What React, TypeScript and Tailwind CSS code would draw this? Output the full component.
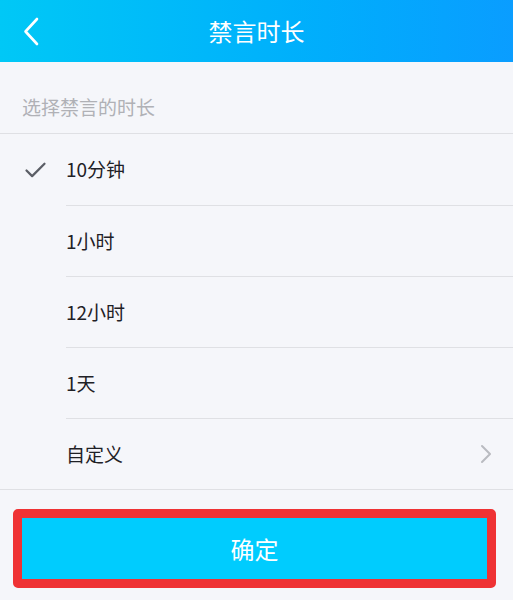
import { Check } from "lucide-react"

const options = [
  { label: "10分钟", checked: true },
  { label: "1小时", checked: false },
  { label: "12小时", checked: false },
  { label: "1天", checked: false },
]

export default function App() {
  return (
    <div className="w-[513px] h-[600px] bg-[#f5f6fa] overflow-hidden flex flex-col" style={{ fontFamily: '"Noto Sans CJK SC", "Noto Sans", sans-serif' }}>
      {/* header */}
      <div className="h-[62px] shrink-0 flex items-center relative bg-gradient-to-r from-[#00c8f6] to-[#0a9dff]">
        <button className="pl-[23px] text-white">
          <svg width="17" height="29" viewBox="0 0 17 29" fill="none" stroke="currentColor" strokeWidth="2.6" strokeLinecap="round" strokeLinejoin="round">
            <path d="M14 2 L2.5 14.5 L14 27" />
          </svg>
        </button>
        <h1 className="absolute left-0 right-0 text-center text-[24px] text-white pointer-events-none">禁言时长</h1>
      </div>

      <div className="h-[72px] shrink-0 flex items-end pb-[15px] px-[22px] border-b border-[#dfe0e4]">
        <span className="text-[19px] leading-[22px] text-[#b0b1b6]">选择禁言的时长</span>
      </div>

      <div className="flex flex-col">
        {options.map((opt, i) => (
          <div key={opt.label} className={`flex items-stretch ${i === 0 ? "h-[72px]" : "h-[71px]"}`}>
            <div className="w-[66px] shrink-0 flex items-center pl-[22px] text-[#5b5e66]">
              {opt.checked && <Check size={27} strokeWidth={2} />}
            </div>
            <div className="flex-1 flex items-center border-b border-[#dfe0e4] text-[19px] text-[#1f2126]">{opt.label}</div>
          </div>
        ))}
        <div className="h-[71px] flex items-center pl-[66px] pr-[21px] justify-between border-b border-[#dfe0e4]">
          <span className="text-[19px] text-[#1f2126]">自定义</span>
          <svg width="12" height="20" viewBox="0 0 12 20" fill="none" stroke="#b9bbc0" strokeWidth="2" strokeLinecap="round" strokeLinejoin="round">
            <path d="M2 2 L10 10 L2 18" />
          </svg>
        </div>
      </div>

      <div className="px-[13px] pt-[19px] pr-[17px]">
        <button className="w-full h-[79px] rounded-[5px] border-[9px] border-[#ef3234] bg-[#00ccfe] text-white text-[24px]">
          确定
        </button>
      </div>
    </div>
  )
}
